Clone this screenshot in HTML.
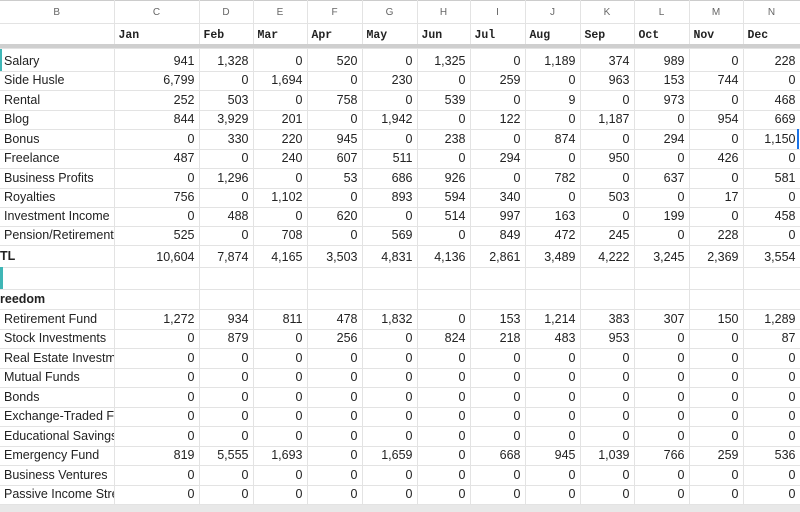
<!DOCTYPE html>
<html><head><meta charset="utf-8"><style>
*{margin:0;padding:0;box-sizing:border-box}
body{width:800px;height:512px;overflow:hidden;background:#fff;font-family:"Liberation Sans",Arial,sans-serif;color:#222;position:relative}
table{border-collapse:collapse;table-layout:fixed;position:absolute;left:0;top:0;width:800px}
td{border:1px solid #e3e3e3;font-size:12.5px;white-space:nowrap;overflow:hidden;text-align:right;padding:0 4px 0 0;vertical-align:bottom;padding-bottom:2px;line-height:15px}
td:first-child{text-align:left;padding-left:4px;border-left:none}
tr.h td{text-align:center;color:#666;font-size:10px;vertical-align:middle;padding:0;border-top:1px solid #ccc}
tr.m td{text-align:left;font-family:"Liberation Mono",monospace;font-weight:bold;font-size:11.5px;padding-left:4px;vertical-align:middle}
tr.t td{vertical-align:middle;padding-bottom:0;padding-top:2px}
tr.t td:first-child{font-weight:bold;padding-left:0;padding-top:0}
tr.b td{font-weight:bold}
tr.b td:first-child{padding-left:0}
.band{position:absolute;left:0;width:800px;background:#cfcfcf}
.teal{position:absolute;left:0;width:3px;background:#3fb6b6}
</style></head><body>
<table>
<colgroup><col style="width:114px"><col style="width:85px"><col style="width:54px"><col style="width:54px"><col style="width:55px"><col style="width:55px"><col style="width:53px"><col style="width:55px"><col style="width:55px"><col style="width:54px"><col style="width:55px"><col style="width:54px"><col style="width:57px"></colgroup>
<tr class="h" style="height:23px"><td>B</td><td>C</td><td>D</td><td>E</td><td>F</td><td>G</td><td>H</td><td>I</td><td>J</td><td>K</td><td>L</td><td>M</td><td>N</td></tr>
<tr class="m" style="height:25px"><td></td><td>Jan</td><td>Feb</td><td>Mar</td><td>Apr</td><td>May</td><td>Jun</td><td>Jul</td><td>Aug</td><td>Sep</td><td>Oct</td><td>Nov</td><td>Dec</td></tr>
<tr style="height:23px"><td>Salary</td><td>941</td><td>1,328</td><td>0</td><td>520</td><td>0</td><td>1,325</td><td>0</td><td>1,189</td><td>374</td><td>989</td><td>0</td><td>228</td></tr>
<tr style="height:19px"><td>Side Husle</td><td>6,799</td><td>0</td><td>1,694</td><td>0</td><td>230</td><td>0</td><td>259</td><td>0</td><td>963</td><td>153</td><td>744</td><td>0</td></tr>
<tr style="height:20px"><td>Rental</td><td>252</td><td>503</td><td>0</td><td>758</td><td>0</td><td>539</td><td>0</td><td>9</td><td>0</td><td>973</td><td>0</td><td>468</td></tr>
<tr style="height:19px"><td>Blog</td><td>844</td><td>3,929</td><td>201</td><td>0</td><td>1,942</td><td>0</td><td>122</td><td>0</td><td>1,187</td><td>0</td><td>954</td><td>669</td></tr>
<tr style="height:20px"><td>Bonus</td><td>0</td><td>330</td><td>220</td><td>945</td><td>0</td><td>238</td><td>0</td><td>874</td><td>0</td><td>294</td><td>0</td><td>1,150</td></tr>
<tr style="height:19px"><td>Freelance</td><td>487</td><td>0</td><td>240</td><td>607</td><td>511</td><td>0</td><td>294</td><td>0</td><td>950</td><td>0</td><td>426</td><td>0</td></tr>
<tr style="height:20px"><td>Business Profits</td><td>0</td><td>1,296</td><td>0</td><td>53</td><td>686</td><td>926</td><td>0</td><td>782</td><td>0</td><td>637</td><td>0</td><td>581</td></tr>
<tr style="height:19px"><td>Royalties</td><td>756</td><td>0</td><td>1,102</td><td>0</td><td>893</td><td>594</td><td>340</td><td>0</td><td>503</td><td>0</td><td>17</td><td>0</td></tr>
<tr style="height:19px"><td>Investment Income</td><td>0</td><td>488</td><td>0</td><td>620</td><td>0</td><td>514</td><td>997</td><td>163</td><td>0</td><td>199</td><td>0</td><td>458</td></tr>
<tr style="height:19px"><td>Pension/Retirement</td><td>525</td><td>0</td><td>708</td><td>0</td><td>569</td><td>0</td><td>849</td><td>472</td><td>245</td><td>0</td><td>228</td><td>0</td></tr>
<tr class="t" style="height:22px"><td>TL</td><td>10,604</td><td>7,874</td><td>4,165</td><td>3,503</td><td>4,831</td><td>4,136</td><td>2,861</td><td>3,489</td><td>4,222</td><td>3,245</td><td>2,369</td><td>3,554</td></tr>
<tr style="height:22px"><td></td><td></td><td></td><td></td><td></td><td></td><td></td><td></td><td></td><td></td><td></td><td></td><td></td></tr>
<tr class="b" style="height:20px"><td>reedom</td><td></td><td></td><td></td><td></td><td></td><td></td><td></td><td></td><td></td><td></td><td></td><td></td></tr>
<tr style="height:20px"><td>Retirement Fund</td><td>1,272</td><td>934</td><td>811</td><td>478</td><td>1,832</td><td>0</td><td>153</td><td>1,214</td><td>383</td><td>307</td><td>150</td><td>1,289</td></tr>
<tr style="height:19px"><td>Stock Investments</td><td>0</td><td>879</td><td>0</td><td>256</td><td>0</td><td>824</td><td>218</td><td>483</td><td>953</td><td>0</td><td>0</td><td>87</td></tr>
<tr style="height:20px"><td>Real Estate Investments</td><td>0</td><td>0</td><td>0</td><td>0</td><td>0</td><td>0</td><td>0</td><td>0</td><td>0</td><td>0</td><td>0</td><td>0</td></tr>
<tr style="height:19px"><td>Mutual Funds</td><td>0</td><td>0</td><td>0</td><td>0</td><td>0</td><td>0</td><td>0</td><td>0</td><td>0</td><td>0</td><td>0</td><td>0</td></tr>
<tr style="height:20px"><td>Bonds</td><td>0</td><td>0</td><td>0</td><td>0</td><td>0</td><td>0</td><td>0</td><td>0</td><td>0</td><td>0</td><td>0</td><td>0</td></tr>
<tr style="height:19px"><td>Exchange-Traded Funds</td><td>0</td><td>0</td><td>0</td><td>0</td><td>0</td><td>0</td><td>0</td><td>0</td><td>0</td><td>0</td><td>0</td><td>0</td></tr>
<tr style="height:20px"><td>Educational Savings</td><td>0</td><td>0</td><td>0</td><td>0</td><td>0</td><td>0</td><td>0</td><td>0</td><td>0</td><td>0</td><td>0</td><td>0</td></tr>
<tr style="height:19px"><td>Emergency Fund</td><td>819</td><td>5,555</td><td>1,693</td><td>0</td><td>1,659</td><td>0</td><td>668</td><td>945</td><td>1,039</td><td>766</td><td>259</td><td>536</td></tr>
<tr style="height:20px"><td>Business Ventures</td><td>0</td><td>0</td><td>0</td><td>0</td><td>0</td><td>0</td><td>0</td><td>0</td><td>0</td><td>0</td><td>0</td><td>0</td></tr>
<tr style="height:19px"><td>Passive Income Streams</td><td>0</td><td>0</td><td>0</td><td>0</td><td>0</td><td>0</td><td>0</td><td>0</td><td>0</td><td>0</td><td>0</td><td>0</td></tr>
</table>
<div class="band" style="top:44px;height:4px"></div>
<div class="band" style="top:505px;height:7px;background:#e8e8e8"></div>
<div class="teal" style="top:49px;height:22px;width:2px"></div>
<div class="teal" style="top:267px;height:22px"></div>
<div style="position:absolute;left:797px;top:129px;width:2px;height:20px;background:#1a73e8"></div>
</body></html>
